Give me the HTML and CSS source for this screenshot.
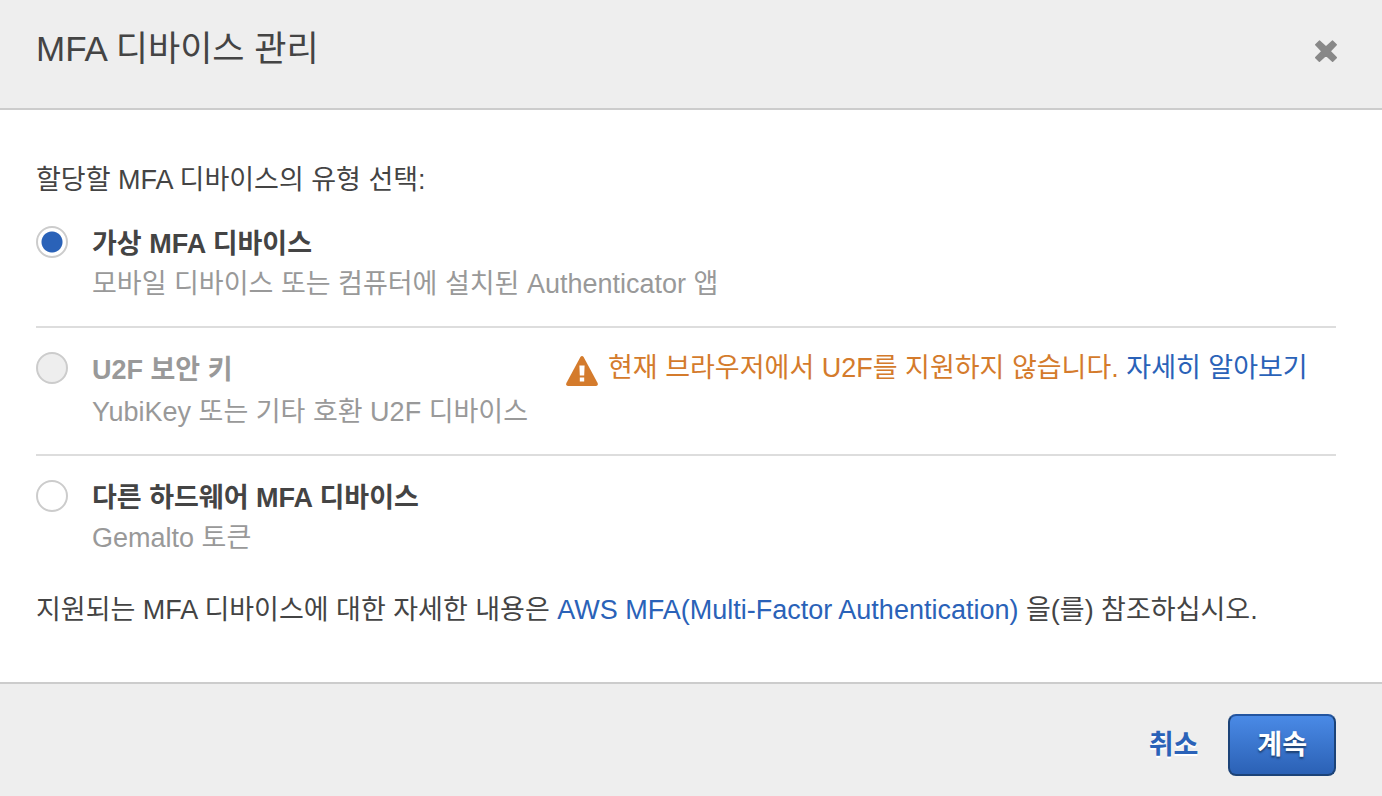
FILE: index.html
```html
<!DOCTYPE html>
<html lang="ko">
<head>
<meta charset="utf-8">
<meta name="viewport" content="width=device-width, initial-scale=1">
<title>MFA 디바이스 관리</title>
<link rel="stylesheet" href="styles.css">
</head>
<body>
<form class="dialog">
  <header class="dialog-header">
    <h1 class="title">MFA 디바이스 관리</h1>
    <button class="close" type="button" aria-label="닫기">
      <svg width="24" height="24" viewBox="0 0 24 24"><path d="M5.4 2.2L12 8.2L18.6 2.2L22.2 5.8L16 12.2L22.2 18.6L18.6 22.2L12 16.2L5.4 22.2L1.8 18.6L8 12.2L1.8 5.8Z" fill="#888" stroke="#888" stroke-width="1.6" stroke-linejoin="round"/></svg>
    </button>
  </header>
  <main class="dialog-body">
    <p class="intro">할당할 MFA 디바이스의 유형 선택:</p>
    <div class="option">
      <input class="radio" type="radio" name="device" id="virtual" checked>
      <div class="option-text">
        <label class="name" for="virtual">가상 MFA 디바이스</label>
        <p class="hint">모바일 디바이스 또는 컴퓨터에 설치된 Authenticator 앱</p>
      </div>
    </div>
    <div class="option option-disabled">
      <input class="radio" type="radio" name="device" id="u2f" disabled>
      <div class="option-text">
        <label class="name" for="u2f">U2F 보안 키</label>
        <p class="hint">YubiKey 또는 기타 호환 U2F 디바이스</p>
      </div>
      <p class="warning">
        <svg class="warning-icon" width="32" height="30" viewBox="0 0 32 30"><path d="M14.4 1Q16-1 17.6 1L31.6 27Q32.4 29.6 30 30H2Q-.4 29.6.4 27Z" fill="#d47b2c"/><path d="M13.4 9.5H18.6L18.2 19.5H13.8ZM13.8 21.5H18.2V25.5H13.8Z" fill="#fff"/></svg>
        <span>현재 브라우저에서 U2F를 지원하지 않습니다. <a class="link" href="#">자세히 알아보기</a></span>
      </p>
    </div>
    <div class="option">
      <input class="radio" type="radio" name="device" id="hardware">
      <div class="option-text">
        <label class="name" for="hardware">다른 하드웨어 MFA 디바이스</label>
        <p class="hint">Gemalto 토큰</p>
      </div>
    </div>
    <p class="more">지원되는 MFA 디바이스에 대한 자세한 내용은 <a class="link" href="#">AWS MFA(Multi-Factor Authentication)</a> 을(를) 참조하십시오.</p>
  </main>
  <footer class="dialog-footer">
    <button class="cancel" type="button">취소</button>
    <button class="continue" type="submit">계속</button>
  </footer>
</form>
</body>
</html>
```
FILE: styles.css
```css
* { box-sizing: border-box; }
body {
  margin: 0;
  background: #fff;
  color: #444;
  font: 27px/40px "Liberation Sans", "Noto Sans CJK KR", sans-serif;
}
h1, p { margin: 0; }
button { font-family: inherit; cursor: pointer; }
.dialog { display: flex; flex-direction: column; min-height: 100vh; }
.dialog-header {
  display: flex;
  align-items: center;
  justify-content: space-between;
  padding: 24px 44px 30px 36px;
  background: #eee;
  border-bottom: 2px solid #ccc;
}
.title {
  padding-bottom: 4px;
  font-size: 35px;
  font-weight: 400;
  line-height: 50px;
}
.close { display: flex; padding: 0; border: 0; background: none; }
.dialog-body { flex: 1; padding: 50px 46px 20px 36px; }
.intro { margin-bottom: 2px; }
.option {
  display: flex;
  align-items: flex-start;
  padding: 22px 0;
  border-bottom: 2px solid #ddd;
}
.option:last-of-type { border-bottom: 0; }
.radio {
  appearance: none;
  flex: none;
  width: 32px;
  height: 32px;
  margin: 2px 24px 0 0;
  border: 2px solid #ccc;
  border-radius: 50%;
  background: #fff;
}
.radio:checked { background: radial-gradient(circle, #2a62b8 10px, #fff 11px); }
.radio:disabled { background: #eee; }
.option-text { display: flex; flex-direction: column; }
.name { font-weight: 700; }
.hint, .option-disabled .name { color: #999; }
.option-disabled .option-text { gap: 2px; }
.warning {
  display: flex;
  align-items: flex-end;
  gap: 10px;
  margin-left: 38px;
  line-height: 36px;
  color: #d47b2c;
}
.warning-icon { flex: none; }
.link { color: #2a62b8; text-decoration: none; }
.more { margin-top: 10px; }
.dialog-footer {
  display: flex;
  align-items: center;
  justify-content: flex-end;
  gap: 30px;
  padding: 30px 46px 20px;
  background: #eee;
  border-top: 2px solid #ccc;
}
.cancel, .continue { font-size: 27px; font-weight: 700; line-height: 36px; }
.cancel {
  padding: 0;
  border: 0;
  background: none;
  color: #2a62b8;
  text-shadow: 0 2px 0 #fff;
}
.continue {
  padding: 11px 27px;
  border: 2px solid #1c4378;
  border-top-color: #2355a0;
  border-radius: 8px;
  background: linear-gradient(#4a8ae6, #2b61b5);
  color: #fff;
  text-shadow: 0 2px 2px #1c3f70;
}
```
